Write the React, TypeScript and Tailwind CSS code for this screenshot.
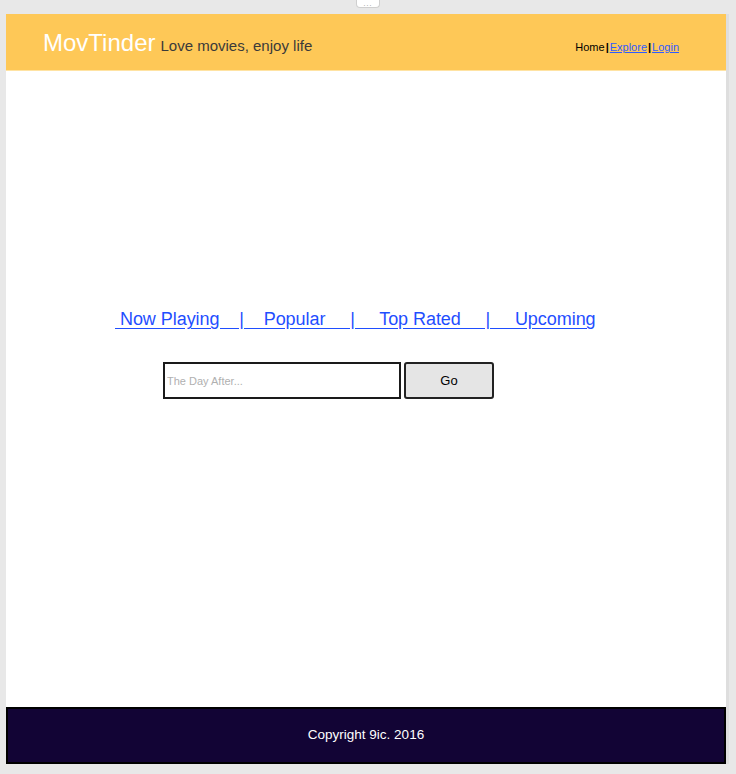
export default function App() {
    return (
        <div className="flex h-[774px] w-[736px] flex-col bg-[#e8e8e8] font-['Liberation_Sans',Arial,sans-serif]">
            {/* top strip with handle */}
            <div className="flex h-[14px] justify-center">
                <div className="flex h-[8px] w-[24px] items-center justify-center rounded-b-sm border border-t-0 border-[#cfcfcf] bg-white text-[7px] leading-none tracking-[1px] text-[#888]">
                    ...
                </div>
            </div>

            {/* page panel */}
            <div className="ml-[6px] flex h-[750px] w-[720px] flex-col bg-white shadow-[3px_0_0_#dedede]">
                {/* header */}
                <header className="flex h-[57px] items-end justify-between border-b border-[#ffe3a3] bg-[#fec857] pb-[15px] pl-[37px] pr-[47px]">
                    <div className="flex items-baseline gap-[5px]">
                        <span className="text-[24px] leading-none text-white">MovTinder</span>
                        <span className="text-[15px] leading-none text-[#3a3a3a]">Love movies, enjoy life</span>
                    </div>
                    <nav className="flex items-baseline pb-[2px] text-[11px] leading-none">
                        <span className="text-black">Home</span>
                        <span className="px-[1px] font-bold text-black">|</span>
                        <a href="#" className="text-[#2f5bff] underline">Explore</a>
                        <span className="px-[1px] font-bold text-black">|</span>
                        <a href="#" className="text-[#2f5bff] underline">Login</a>
                    </nav>
                </header>

                {/* main */}
                <main className="flex flex-1 flex-col">
                    <div className="h-[237px]" />
                    <div className="pl-[109px]">
                        <a href="#" className="whitespace-pre text-[18px] leading-none tracking-[-0.05px] text-[#1f4eff] underline underline-offset-[3px]">
                            {" Now Playing    |    Popular     |     Top Rated     |     Upcoming"}
                        </a>
                    </div>
                    <div className="mt-[30px] flex gap-[3px] pl-[157px]">
                        <input
                            type="text"
                            placeholder="The Day After..."
                            className="h-[37px] w-[238px] border-2 border-[#1a1a1a] px-[2px] text-[11px] text-black outline-none placeholder:text-[#b0b0b0]"
                        />
                        <button className="h-[37px] w-[90px] rounded-[3px] border-2 border-[#222] bg-[#e5e5e5] text-[13px] text-black">
                            Go
                        </button>
                    </div>
                </main>

                {/* footer */}
                <footer className="flex h-[57px] items-center justify-center border-2 border-black bg-[#120435] text-[13.5px] text-white">
                    Copyright 9ic. 2016
                </footer>
            </div>
        </div>
    );
}
